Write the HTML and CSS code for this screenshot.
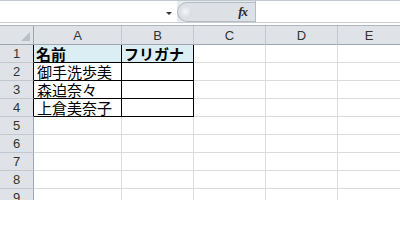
FILE: index.html
```html
<!DOCTYPE html>
<html lang="ja">
<head>
<meta charset="utf-8">
<title>Sheet</title>
<link rel="stylesheet" href="styles.css">
</head>
<body>
<div class="toolbar">
  <div class="namebox"><span class="arrow"></span></div>
  <div class="fxarea"><span class="knob"></span><span class="fx">fx</span></div>
  <div class="formula"></div>
</div>
<div class="sep"></div>
<div class="sheet">
  <div class="corner"><svg width="33" height="18" viewBox="0 0 33 18"><polygon points="30,6 30,15 21,15" fill="#b9bfc6"/></svg></div>
  <div class="colhdr">A</div>
  <div class="colhdr">B</div>
  <div class="colhdr">C</div>
  <div class="colhdr">D</div>
  <div class="colhdr last">E</div>

  <div class="rowhdr tbl">1</div>
  <div class="cell tbl head"><span>名前</span></div>
  <div class="cell tbl head"><span>フリガナ</span></div>
  <div class="cell"></div><div class="cell"></div><div class="cell last"></div>

  <div class="rowhdr tbl">2</div>
  <div class="cell tbl"><span>御手洗歩美</span></div>
  <div class="cell tbl"></div>
  <div class="cell"></div><div class="cell"></div><div class="cell last"></div>

  <div class="rowhdr tbl">3</div>
  <div class="cell tbl"><span>森迫奈々</span></div>
  <div class="cell tbl"></div>
  <div class="cell"></div><div class="cell"></div><div class="cell last"></div>

  <div class="rowhdr tbl">4</div>
  <div class="cell tbl"><span>上倉美奈子</span></div>
  <div class="cell tbl"></div>
  <div class="cell"></div><div class="cell"></div><div class="cell last"></div>

  <div class="rowhdr">5</div>
  <div class="cell"></div><div class="cell"></div><div class="cell"></div><div class="cell"></div><div class="cell last"></div>
  <div class="rowhdr">6</div>
  <div class="cell"></div><div class="cell"></div><div class="cell"></div><div class="cell"></div><div class="cell last"></div>
  <div class="rowhdr">7</div>
  <div class="cell"></div><div class="cell"></div><div class="cell"></div><div class="cell"></div><div class="cell last"></div>
  <div class="rowhdr">8</div>
  <div class="cell"></div><div class="cell"></div><div class="cell"></div><div class="cell"></div><div class="cell last"></div>
  <div class="rowhdr">9</div>
  <div class="cell"></div><div class="cell"></div><div class="cell"></div><div class="cell"></div><div class="cell last"></div>
</div>
</body>
</html>
```
FILE: styles.css
```css
* { box-sizing: border-box; }
html, body {
  margin: 0;
  padding: 0;
  width: 400px;
  height: 200px;
  overflow: hidden;
  background: #ffffff;
}
body {
  font-family: "Noto Sans CJK JP", "Liberation Sans", sans-serif;
}
.toolbar {
  display: flex;
  height: 23px;
  border-top: 1px solid #c2c8cf;
  border-bottom: 1px solid #c9ced4;
  background: #e8ebee;
}
.namebox {
  width: 177px;
  background: #ffffff;
  display: flex;
  align-items: center;
  justify-content: flex-end;
  padding-right: 5px;
}
.arrow {
  width: 0;
  height: 0;
  border-left: 3px solid transparent;
  border-right: 3px solid transparent;
  border-top: 3px solid #333333;
  margin-top: 3px;
}
.fxarea {
  width: 78px;
  margin-top: 1px;
  height: 20px;
  display: flex;
  align-items: center;
  justify-content: space-between;
  background: #dde1e6;
  border: 1px solid #b4bbc3;
  border-right: none;
  border-radius: 10px 0 0 10px;
  padding: 0 8px 0 3px;
}
.knob {
  width: 11px;
  height: 11px;
  border-radius: 50%;
  background: radial-gradient(circle at 40% 40%, #f4f6f8 0%, #d9dde2 70%, #c4c9cf 100%);
}
.fx {
  font-family: "Liberation Serif", serif;
  font-style: italic;
  font-weight: bold;
  font-size: 13px;
  color: #2a2a2a;
  letter-spacing: -1px;
}
.formula {
  flex: 1;
  background: #ffffff;
  border-left: 1px solid #b4bbc3;
}
.sep {
  height: 3px;
  border-bottom: 1px solid #aeb6bf;
  background: #ffffff;
}
.sheet {
  display: grid;
  grid-template-columns: 34px 88px 72px 72px 72px 1fr;
  grid-template-rows: 19px;
  grid-auto-rows: 18px;
}
.corner, .colhdr, .rowhdr {
  background: #dfe3e8;
  font-family: "Liberation Sans", sans-serif;
  font-size: 13px;
  color: #333333;
  display: flex;
  align-items: center;
  justify-content: center;
}
.corner {
  border-right: 1px solid #9ea7b1;
  border-bottom: 1px solid #9ea7b1;
  align-items: flex-end;
}
.corner svg { display: block; }
.colhdr {
  border-right: 1px solid #c3c8ce;
  border-bottom: 1px solid #9ea7b1;
}
.rowhdr {
  border-right: 1px solid #9ea7b1;
  border-bottom: 1px solid #c3c8ce;
}
.rowhdr.tbl { border-right-color: #000000; }
.cell {
  border-right: 1px solid #dadcdd;
  border-bottom: 1px solid #dadcdd;
  font-size: 15px;
  color: #000000;
  padding-left: 3px;
  white-space: nowrap;
  display: flex;
  align-items: flex-end;
}
.cell span {
  display: block;
  line-height: 16px;
  height: 16px;
}
.cell.tbl {
  border-right-color: #000000;
  border-bottom-color: #000000;
}
.cell.head {
  background: #daeef3;
  font-weight: bold;
  padding-left: 2px;
}
.last { border-right: none; }
```
